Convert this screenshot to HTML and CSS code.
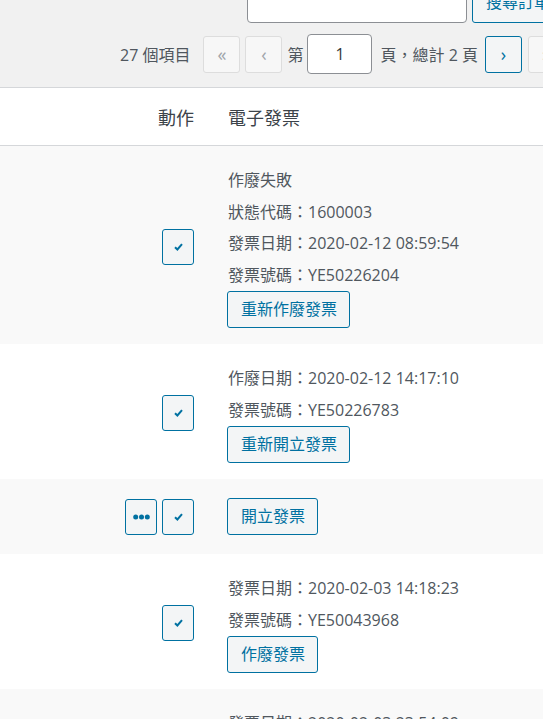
FILE: index.html
```html
<!DOCTYPE html>
<html lang="zh-Hant">
<head>
  <meta charset="UTF-8">
  <meta name="viewport" content="width=device-width, initial-scale=1.0">
  <title>訂單</title>
  <link rel="stylesheet" href="styles.css">
</head>
<body>

  <div class="tablenav">
    <div class="search-box">
      <input type="search" class="search-input" />
      <button class="button">搜尋訂單</button>
    </div>
    <div class="pagination">
      <span class="num-items">27 個項目</span>
      <span class="page-btn disabled first">«</span>
      <span class="page-btn disabled">‹</span>
      <span class="page-label">第</span>
      <input type="text" class="page-input" value="1" />
      <span class="page-total">頁，總計 2 頁</span>
      <span class="page-btn next">›</span>
      <span class="page-btn disabled last">»</span>
    </div>
  </div>

  <div class="list">
    <div class="row head">
      <div class="col-action">動作</div>
      <div class="col-invoice">電子發票</div>
    </div>

    <div class="row alt">
      <div class="col-action">
        <span class="icon-btn"><svg width="9" height="8" viewBox="0 0 9 8"><path d="M1 4.2 L3.4 6.5 L8 1.2" fill="none" stroke="#0071a1" stroke-width="2"/></svg></span>
      </div>
      <div class="col-invoice">
        <div class="line">作廢失敗</div>
        <div class="line">狀態代碼：1600003</div>
        <div class="line">發票日期：2020-02-12 08:59:54</div>
        <div class="line">發票號碼：YE50226204</div>
        <span class="button">重新作廢發票</span>
      </div>
    </div>

    <div class="row">
      <div class="col-action">
        <span class="icon-btn"><svg width="9" height="8" viewBox="0 0 9 8"><path d="M1 4.2 L3.4 6.5 L8 1.2" fill="none" stroke="#0071a1" stroke-width="2"/></svg></span>
      </div>
      <div class="col-invoice">
        <div class="line">作廢日期：2020-02-12 14:17:10</div>
        <div class="line">發票號碼：YE50226783</div>
        <span class="button">重新開立發票</span>
      </div>
    </div>

    <div class="row alt only-btn">
      <div class="col-action">
        <span class="icon-btn"><svg width="17" height="6" viewBox="0 0 17 6"><circle cx="2.7" cy="3" r="2.5" fill="#0071a1"/><circle cx="8.5" cy="3" r="2.5" fill="#0071a1"/><circle cx="14.3" cy="3" r="2.5" fill="#0071a1"/></svg></span>
        <span class="icon-btn"><svg width="9" height="8" viewBox="0 0 9 8"><path d="M1 4.2 L3.4 6.5 L8 1.2" fill="none" stroke="#0071a1" stroke-width="2"/></svg></span>
      </div>
      <div class="col-invoice">
        <span class="button">開立發票</span>
      </div>
    </div>

    <div class="row">
      <div class="col-action">
        <span class="icon-btn"><svg width="9" height="8" viewBox="0 0 9 8"><path d="M1 4.2 L3.4 6.5 L8 1.2" fill="none" stroke="#0071a1" stroke-width="2"/></svg></span>
      </div>
      <div class="col-invoice">
        <div class="line">發票日期：2020-02-03 14:18:23</div>
        <div class="line">發票號碼：YE50043968</div>
        <span class="button">作廢發票</span>
      </div>
    </div>

    <div class="row alt">
      <div class="col-action"></div>
      <div class="col-invoice">
        <div class="line">發票日期：2020-02-03 23:54:09</div>
        <div class="line">發票號碼：YE50043970</div>
        <span class="button">作廢發票</span>
      </div>
    </div>
  </div>

</body>
</html>
```

FILE: styles.css
```css
body {
  font-family: "Open Sans", "Noto Sans CJK TC", sans-serif;
  font-size: 16px;
  color: #50575e;
  background-color: #fff;
  margin: 0;
  overflow: hidden;
}
.tablenav {
  background-color: #f1f1f1;
  height: 87px;
  border-bottom: 1px solid #d5d7da;
  overflow: hidden;
}
.search-box {
  display: flex;
  gap: 5px;
  margin-top: -18px;
  padding-left: 247px;
  white-space: nowrap;
}
.search-input {
  width: 220px;
  height: 41px;
  box-sizing: border-box;
  border: 1px solid #8c8f94;
  border-radius: 4px;
  background: #fff;
  flex-shrink: 0;
}
.search-box .button {
  height: 41px;
  margin-left: 0;
  flex-shrink: 0;
}
.pagination {
  display: flex;
  align-items: center;
  height: 40px;
  margin-top: 11px;
  padding-left: 120px;
  white-space: nowrap;
}
.num-items {
  margin-right: 13px;
}
.page-btn {
  display: flex;
  align-items: center;
  justify-content: center;
  flex-shrink: 0;
  width: 37px;
  height: 37px;
  box-sizing: border-box;
  border: 1px solid #0071a1;
  border-radius: 3px;
  background-color: #f3f5f6;
  color: #0071a1;
  font-size: 18px;
  margin-right: 5px;
}
.page-btn.disabled {
  border-color: #ddd;
  background-color: #f7f7f7;
  color: #a0a5aa;
}
.page-btn.next {
  margin-right: 6px;
}
.page-label {
  margin-right: 4px;
}
.page-input {
  width: 65px;
  height: 40px;
  box-sizing: border-box;
  border: 1px solid #8c8f94;
  border-radius: 4px;
  background: #fff;
  text-align: center;
  font-family: inherit;
  font-size: 16px;
  color: #32373c;
  margin-right: 8px;
  flex-shrink: 0;
}
.page-total {
  margin-right: 7px;
}
.row {
  display: grid;
  grid-template-columns: 218px 1fr;
  padding: 19px 0 16px;
}
.row.alt {
  background-color: #f9f9f9;
}
.row.only-btn {
  padding-bottom: 19px;
}
.row.head {
  height: 58px;
  box-sizing: border-box;
  padding: 0;
  align-items: center;
  font-size: 18px;
  color: #3c434a;
  border-bottom: 1px solid #d5d7da;
}
.col-action {
  display: flex;
  justify-content: flex-end;
  align-items: center;
  gap: 5px;
  padding-right: 24px;
}
.col-invoice {
  padding-left: 10px;
}
.line {
  height: 31.5px;
  line-height: 31.5px;
}
.icon-btn {
  display: flex;
  align-items: center;
  justify-content: center;
  width: 32px;
  height: 36px;
  box-sizing: border-box;
  border: 1px solid #0071a1;
  border-radius: 3px;
  background-color: #f3f5f6;
}
.button {
  display: inline-block;
  height: 37px;
  line-height: 35px;
  box-sizing: border-box;
  margin-left: -1px;
  padding: 0 12px 0 13px;
  border: 1px solid #0071a1;
  border-radius: 3px;
  background-color: #f3f5f6;
  color: #0071a1;
  font-family: inherit;
  font-size: 16px;
  white-space: nowrap;
}
```
